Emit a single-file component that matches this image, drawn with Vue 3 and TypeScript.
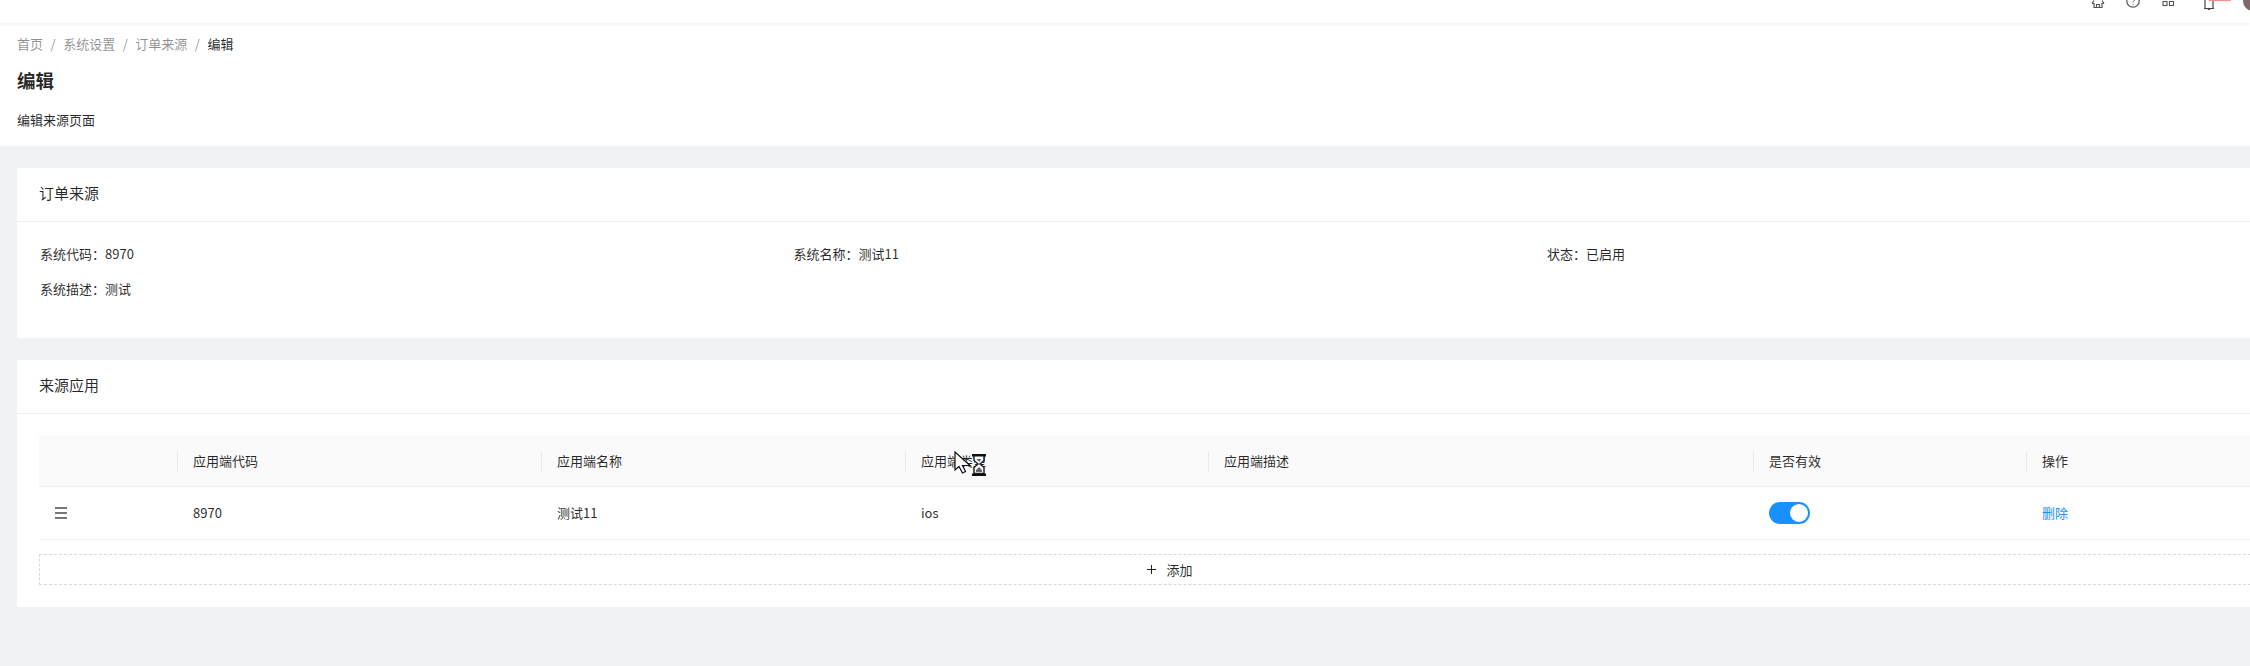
<script setup lang="ts">
const crumbs = ['首页', '系统设置', '订单来源']
const info = [
  { label: '系统代码：', value: '8970' },
  { label: '系统名称：', value: '测试11' },
  { label: '状态：', value: '已启用' },
  { label: '系统描述：', value: '测试' },
]
const heads = ['', '应用端代码', '应用端名称', '应用端类型', '应用端描述', '是否有效', '操作']
</script>

<template>
  <div class="page">
    <header class="topbar">
      <svg class="ti home" width="14" height="10" viewBox="0 0 14 10"><path d="M1 3.500 3 .5M13 3.500 11 .5M1 3.500h2M13 3.500h-2M3 3v4.500h8V3M5.500 7.500V4.500h3v3" fill="none" stroke="#555" stroke-width="1.200"/></svg>
      <svg class="ti help" width="16" height="10" viewBox="0 0 16 10"><circle cx="8" cy="1" r="6.200" fill="none" stroke="#555" stroke-width="1.200"/><path d="M8 3.800v.9M6.600 -.5a1.500 1.500 0 1 1 2.200 1.600c-.6.400-.8.700-.8 1.200" fill="none" stroke="#555"/></svg>
      <svg class="ti apps" width="14" height="8" viewBox="0 0 14 8"><rect x="1" y="1.500" width="4" height="4" fill="none" stroke="#555" stroke-width="1.100"/><rect x="7.500" y="1.500" width="4" height="4" fill="none" stroke="#555" stroke-width="1.100"/></svg>
      <svg class="ti bell" width="16" height="11" viewBox="0 0 16 11"><path d="M4 0v8.500h-1M4 8.500h8h1M12 0v8.500M7 8.500a1 1 0 0 0 2 0" fill="none" stroke="#444" stroke-width="1.200"/></svg>
      <span class="badge"></span>
      <span class="avatar"></span>
    </header>

    <section class="head">
      <nav class="crumbs">
        <template v-for="c in crumbs" :key="c">
          <span class="crumb">{{ c }}</span><span class="sep">/</span>
        </template>
        <span class="current">编辑</span>
      </nav>
      <h1>编辑</h1>
      <p>编辑来源页面</p>
    </section>

    <main class="body">
      <section class="card">
        <div class="card-title">订单来源</div>
        <div class="info">
          <div v-for="i in info" :key="i.label" class="info-item">{{ i.label }}{{ i.value }}</div>
        </div>
      </section>

      <section class="card second">
        <div class="card-title">来源应用</div>
        <div class="table-wrap">
          <div class="grid thead">
            <div v-for="(h, n) in heads" :key="n" class="th" :class="{ first: n === 0 }">{{ h }}</div>
          </div>
          <div class="grid tbody">
            <div class="td">
              <span class="drag"><i></i><i></i><i></i></span>
            </div>
            <div class="td text">8970</div>
            <div class="td text">测试11</div>
            <div class="td text">ios</div>
            <div class="td"></div>
            <div class="td"><span class="switch"><b></b></span></div>
            <div class="td text"><a class="link">删除</a></div>
          </div>
          <button class="add">
            <svg class="plus" width="9" height="9" viewBox="0 0 9 9"><path d="M4.500 0v9M0 4.500h9" stroke="#222" fill="none"/></svg>添加
          </button>
        </div>
      </section>
    </main>

    <svg class="cursor" width="34" height="26" viewBox="0 0 34 26">
      <path d="M1 1v18l4-3.500 3.500 6.500 3-1.500-3-6h7.500z" fill="#fff" stroke="#111" stroke-width="1.200"/>
      <path d="M20 4v5.500l4 3.500-4 3.500v6h10v-6l-4-3.500 4-3.500V4z" fill="#fff" stroke="#222" stroke-width="1.500"/>
      <rect x="18" y="3" width="14" height="2.500" fill="#111"/>
      <rect x="18" y="22.500" width="14" height="2.500" fill="#111"/>
      <path d="M22 21v-2l3-3 3 3v2zM22.500 8h5l-2.500 3z" fill="#666"/>
    </svg>
  </div>
</template>

<style>
html, body { margin: 0; overflow: hidden; }
</style>

<style scoped>
.page {
  position: relative;
  width: 2250px;
  height: 666px;
  overflow: hidden;
  background: #f0f2f5;
  font-family: "Noto Sans CJK SC", "Liberation Sans", sans-serif;
  font-size: 13px;
  color: rgba(0, 0, 0, 0.85);
}
.topbar {
  position: relative;
  height: 23px;
  background: #fff;
  box-shadow: 0 1px 4px rgba(0, 21, 41, 0.08);
  z-index: 1;
}
.ti { position: absolute; top: 0; }
.home { left: 2091px; }
.help { left: 2125px; }
.apps { left: 2162px; }
.bell { left: 2201px; }
.badge {
  position: absolute;
  left: 2209px;
  top: 0;
  width: 22px;
  height: 1px;
  background: #ff8a8a;
}
.avatar {
  position: absolute;
  left: 2243px;
  top: -9px;
  width: 20px;
  height: 20px;
  border-radius: 50%;
  background: #7d6a66;
}
.head {
  height: 123px;
  padding: 8px 17px 0;
  box-sizing: border-box;
  background: #fff;
}
.crumbs { display: flex; align-items: center; height: 25px; line-height: 25px; color: rgba(0, 0, 0, 0.45); }
.sep { margin: 0 7.500px; }
.current { color: rgba(0, 0, 0, 0.85); }
h1 {
  margin: 10px 0 0;
  font-size: 18.500px;
  line-height: 28px;
  font-weight: 600;
}
p { margin: 16px 0 0; line-height: 20px; }
.body { padding: 22px 0 0 17px; width: 2300px; box-sizing: border-box; }
.card { background: #fff; }
.card-title {
  height: 54px;
  line-height: 50px;
  padding-left: 22px;
  font-size: 15px;
  border-bottom: 1px solid #f0f0f0;
  box-sizing: border-box;
}
.info {
  height: 116px;
  box-sizing: border-box;
  padding: 14.500px 0 0 23px;
  display: grid;
  grid-template-columns: repeat(3, 753.500px);
  grid-auto-rows: 35px;
  align-items: center;
}
.info-item { line-height: 20px; }
.second { margin-top: 22px; height: 247px; }
.table-wrap { padding: 22px 0 0 22px; }
.grid {
  display: grid;
  grid-template-columns: 138px 364px 364px 303px 545px 273px 300px;
}
.thead { height: 51px; background: #fafafa; border-bottom: 1px solid #f0f0f0; box-sizing: border-box; }
.th { position: relative; display: flex; align-items: center; padding: 0 0 2px 16px; }
.th:not(.first)::before {
  content: "";
  position: absolute;
  left: 0;
  top: 50%;
  height: 21px;
  width: 1px;
  transform: translateY(-50%);
  background: rgba(0, 0, 0, 0.06);
}
.tbody { height: 53px; border-bottom: 1px solid #f0f0f0; box-sizing: border-box; }
.td { display: flex; align-items: center; padding-left: 16px; }
.td.text { padding-bottom: 2px; }
.drag { display: flex; flex-direction: column; gap: 2.800px; width: 12px; }
.drag i { display: block; height: 2px; background: #777; }
.switch {
  position: relative;
  display: block;
  width: 41px;
  height: 22px;
  border-radius: 11px;
  background: #1890ff;
}
.switch b {
  position: absolute;
  right: 2px;
  top: 2px;
  width: 18px;
  height: 18px;
  border-radius: 50%;
  background: #fff;
}
.link { color: #1890ff; }
.add {
  display: flex;
  align-items: center;
  justify-content: center;
  width: 2262px;
  height: 31px;
  margin-top: 14px;
  padding: 0 0 1px;
  border: 1px dashed #d9d9d9;
  background: #fff;
  font: inherit;
  color: rgba(0, 0, 0, 0.85);
}
.plus { margin-right: 10px; }
.cursor { position: absolute; left: 954px; top: 451px; }
</style>
